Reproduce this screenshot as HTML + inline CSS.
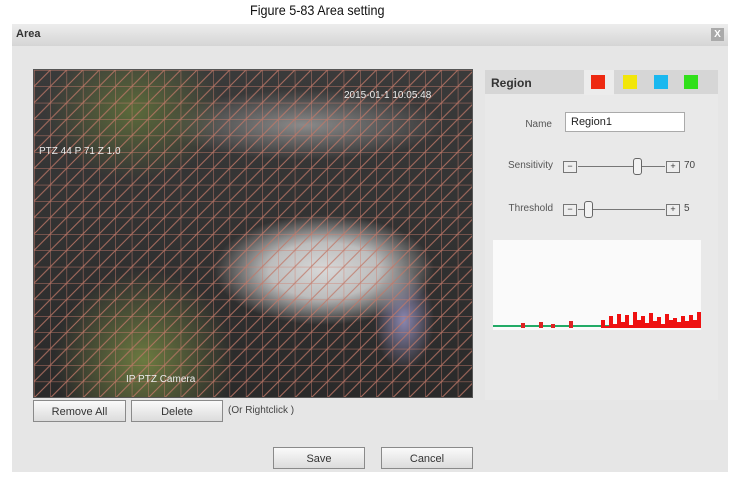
<!DOCTYPE html>
<html><head><style>
body{margin:0;width:738px;height:481px;background:#fff;position:relative;overflow:hidden;font-family:"Liberation Sans",Arial,sans-serif;}
.a{position:absolute}
.btn{position:absolute;height:22px;border:1px solid #8a8a8a;background:linear-gradient(#fafafa,#dcdcdc);font-size:11px;color:#333;text-align:center;line-height:22px;box-sizing:border-box}
.lbl{position:absolute;font-size:10px;color:#555;text-align:right}
.sb{position:absolute;width:12px;height:10px;border:1px solid #777;background:#eee;font-size:9px;line-height:9px;text-align:center;color:#333}
</style></head><body>
<div class="a" style="left:250px;top:2px;font-size:14px;color:#111;transform:scaleX(0.9);transform-origin:left">Figure 5-83 Area setting</div>
<div class="a" style="left:12px;top:24px;width:716px;height:448px;background:#e6e6e6"></div>
<div class="a" style="left:12px;top:24px;width:716px;height:22px;background:linear-gradient(#ededed,#d5d5d5)"></div>
<div class="a" style="left:16px;top:28px;font-size:11px;font-weight:bold;color:#333">Area</div>
<div class="a" style="left:711px;top:28px;width:13px;height:13px;background:#aaa;color:#fff;font-size:10px;text-align:center;line-height:13px;font-weight:bold">X</div>
<div class="a" style="left:33px;top:69px;width:440px;height:329px;background:
radial-gradient(ellipse 110px 55px at 290px 200px,#d8d8d8,#bdbdbd 50%,transparent),
radial-gradient(ellipse 30px 50px at 370px 250px,#8a86b0,transparent),
radial-gradient(ellipse 90px 90px at 110px 290px,#6c7a40,transparent),
radial-gradient(ellipse 90px 70px at 100px 40px,#5c6a3a,transparent),
radial-gradient(ellipse 140px 35px at 270px 55px,#8a8a8a,transparent),
linear-gradient(#3a3a3a,#2a2a2a);border:1px solid #555;box-sizing:border-box;overflow:hidden">
<svg width="440" height="329" style="position:absolute;left:0;top:0">
<defs><pattern id="g" width="16.3" height="16.4" patternUnits="userSpaceOnUse"><path d="M0 0H16.3M0 0V16.4" stroke="#d08070" stroke-width="1" fill="none"/><path d="M0 16.4L16.3 0M-8 8.2L8 -8.2M8 24.6L24.3 8.2" stroke="#c07868" stroke-width="1" fill="none"/></pattern></defs>
<rect width="440" height="329" fill="url(#g)" opacity=".85"/>
<text x="310" y="28" fill="#eee" font-size="10" font-family="Liberation Sans">2015-01-1 10:05:48</text>
<text x="5" y="84" fill="#eee" font-size="10" font-family="Liberation Sans">PTZ  44  P 71 Z 1.0</text>
<text x="92" y="312" fill="#eee" font-size="10" font-family="Liberation Sans">IP PTZ Camera</text>
</svg></div>
<div class="btn" style="left:33px;top:400px;width:93px">Remove All</div>
<div class="btn" style="left:131px;top:400px;width:92px">Delete</div>
<div class="a" style="left:228px;top:405px;font-size:10px;color:#444">(Or Rightclick )</div>
<div class="a" style="left:485px;top:70px;width:233px;height:330px;background:#e9e9e9"></div>
<div class="a" style="left:485px;top:70px;width:233px;height:24px;background:#d6d6d6"></div>
<div class="a" style="left:491px;top:76px;font-size:12px;font-weight:bold;color:#333">Region</div>
<div class="a" style="left:584px;top:70px;width:30px;height:25px;background:#ececec"></div>
<div class="a" style="left:591px;top:75px;width:14px;height:14px;background:#ee2a12"></div>
<div class="a" style="left:623px;top:75px;width:14px;height:14px;background:#f2e60a"></div>
<div class="a" style="left:654px;top:75px;width:14px;height:14px;background:#1ab8ef"></div>
<div class="a" style="left:684px;top:75px;width:14px;height:14px;background:#30e01a"></div>
<div class="lbl" style="left:500px;top:119px;width:52px">Name</div>
<div class="a" style="left:565px;top:112px;width:120px;height:20px;background:#fff;border:1px solid #aaa;box-sizing:border-box;font-size:11px;padding:3px 5px;color:#222">Region1</div>
<div class="lbl" style="left:490px;top:160px;width:63px">Sensitivity</div>
<div class="sb" style="left:563px;top:161px">−</div>
<div class="a" style="left:578px;top:166px;width:87px;height:1px;background:#777"></div>
<div class="a" style="left:633px;top:158px;width:7px;height:15px;border:1px solid #666;border-radius:3px;background:#f2f2f2"></div>
<div class="sb" style="left:666px;top:161px">+</div>
<div class="a" style="left:684px;top:160px;font-size:10px;color:#444">70</div>
<div class="lbl" style="left:490px;top:203px;width:63px">Threshold</div>
<div class="sb" style="left:563px;top:204px">−</div>
<div class="a" style="left:578px;top:209px;width:87px;height:1px;background:#777"></div>
<div class="a" style="left:584px;top:201px;width:7px;height:15px;border:1px solid #666;border-radius:3px;background:#f2f2f2"></div>
<div class="sb" style="left:666px;top:204px">+</div>
<div class="a" style="left:684px;top:203px;font-size:10px;color:#444">5</div>
<div class="a" style="left:493px;top:240px;width:208px;height:90px;background:#fafafa"></div>
<svg class="a" style="left:491px;top:300px" width="212" height="32">
<path d="M2 26H210" stroke="#2a6" stroke-width="2"/>
<path d="M110 28 V20 H114 V26 H118 V16 H122 V24 H126 V14 H130 V22 H134 V15 H138 V25 H142 V12 H146 V20 H150 V16 H154 V23 H158 V13 H162 V21 H166 V17 H170 V24 H174 V14 H178 V20 H182 V18 H186 V22 H190 V16 H194 V21 H198 V15 H202 V20 H206 V12 H210 V28Z" fill="#e11"/>
<path d="M30 28V23H34V28M48 28V22H52V28M60 28V24H64V28M78 28V21H82V28" fill="#d22"/>
</svg>
<div class="btn" style="left:273px;top:447px;width:92px">Save</div>
<div class="btn" style="left:381px;top:447px;width:92px">Cancel</div>
</body></html>
